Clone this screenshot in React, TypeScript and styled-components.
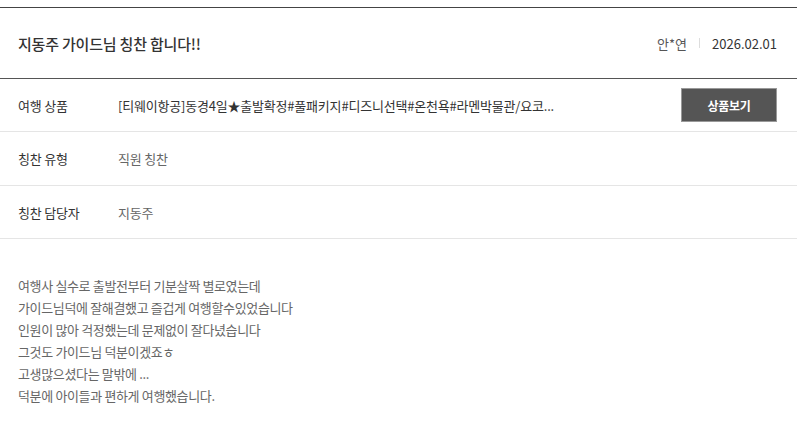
import React from 'react';
import styled, { createGlobalStyle } from 'styled-components';

const GlobalStyle = createGlobalStyle`
  html, body {
    margin: 0;
    padding: 0;
    background: #fff;
  }
  body {
    font-family: "Noto Sans CJK KR", "Noto Sans", sans-serif;
    color: #333;
  }
`;

const Page = styled.div`
  width: 797px;
  padding-top: 7px;
`;

const Article = styled.article`
  border-top: 1px solid #444;
`;

const Header = styled.header`
  display: flex;
  align-items: center;
  justify-content: space-between;
  height: 70px;
  padding: 0 20px 0 18px;
  border-bottom: 1px solid #555;
`;

const Title = styled.h1`
  margin: 0;
  font-size: 15px;
  font-weight: 500;
  letter-spacing: -0.2px;
  color: #333;
`;

const Meta = styled.div`
  display: flex;
  align-items: center;
  font-size: 13px;
`;

const Writer = styled.span`
  color: #555;
`;

const Divider = styled.span`
  width: 1px;
  height: 10px;
  margin: 0 12px;
  background: #ddd;
`;

const Date = styled.span`
  color: #333;
  font-weight: 400;
`;

const InfoRow = styled.div<{ $height?: number }>`
  display: flex;
  align-items: center;
  height: ${(p) => p.$height ?? 52}px;
  padding: 0 20px 0 18px;
  border-bottom: 1px solid #e5e5e5;
  font-size: 13px;
  letter-spacing: -0.2px;
`;

const Label = styled.div`
  flex: 0 0 100px;
  color: #333;
`;

const Value = styled.div<{ $strong?: boolean }>`
  flex: 1;
  min-width: 0;
  color: ${(p) => (p.$strong ? '#333' : '#666')};
  white-space: nowrap;
  overflow: hidden;
`;

const ViewButton = styled.button`
  flex: 0 0 auto;
  width: 96px;
  height: 34px;
  background: #555;
  border: 1px solid #999;
  color: #fff;
  font-family: inherit;
  font-size: 12px;
  font-weight: 700;
  letter-spacing: -0.3px;
  cursor: pointer;
`;

const Content = styled.div`
  padding: 36px 18px 30px;
  font-size: 13px;
  line-height: 22px;
  letter-spacing: -0.35px;
  color: #666;
`;

const Line = styled.p`
  margin: 0;
`;

const contentLines = [
  '여행사 실수로 출발전부터 기분살짝 별로였는데',
  '가이드님덕에 잘해결했고 즐겁게 여행할수있었습니다',
  '인원이 많아 걱정했는데 문제없이 잘다녔습니다',
  '그것도 가이드님 덕분이겠죠ㅎ',
  '고생많으셨다는 말밖에 ...',
  '덕분에 아이들과 편하게 여행했습니다.',
];

export default function App(): React.ReactElement {
  return (
    <Page>
      <GlobalStyle />
      <Article>
        <Header>
          <Title>지동주 가이드님 칭찬 합니다!!</Title>
          <Meta>
            <Writer>안*연</Writer>
            <Divider />
            <Date>2026.02.01</Date>
          </Meta>
        </Header>
        <InfoRow>
          <Label>여행 상품</Label>
          <Value $strong>
            [티웨이항공]동경4일★출발확정#풀패키지#디즈니선택#온천욕#라멘박물관/요코...
          </Value>
          <ViewButton>상품보기</ViewButton>
        </InfoRow>
        <InfoRow $height={53}>
          <Label>칭찬 유형</Label>
          <Value>직원 칭찬</Value>
        </InfoRow>
        <InfoRow>
          <Label>칭찬 담당자</Label>
          <Value>지동주</Value>
        </InfoRow>
        <Content>
          {contentLines.map((line, i) => (
            <Line key={i}>{line}</Line>
          ))}
        </Content>
      </Article>
    </Page>
  );
}
